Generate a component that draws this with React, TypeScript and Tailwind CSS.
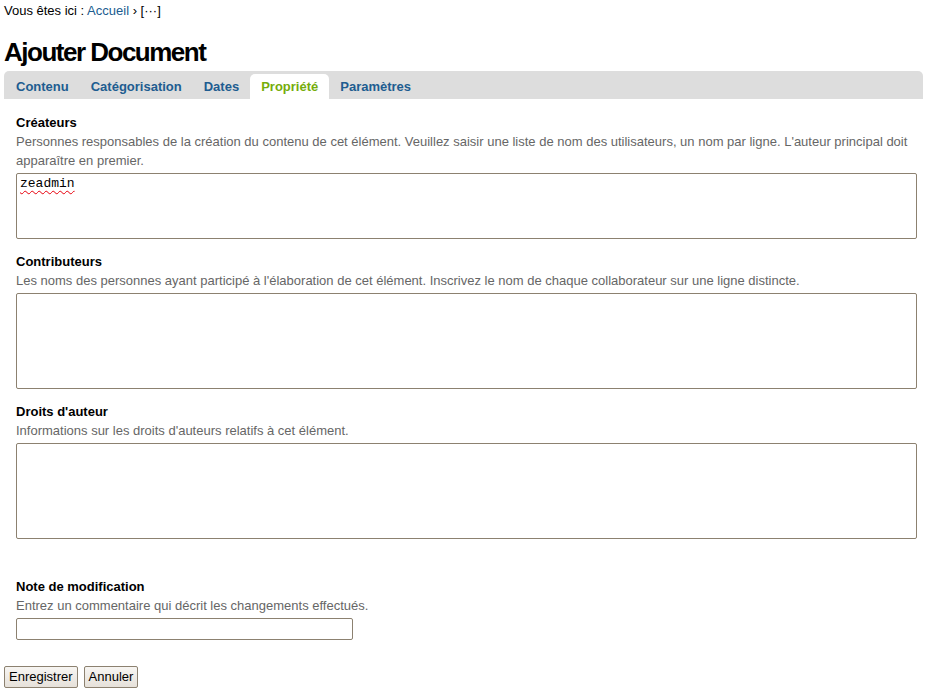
import React from 'react';

const tabs = ['Contenu', 'Catégorisation', 'Dates', 'Propriété', 'Paramètres'];

function Field({
  label,
  help,
  height,
  children,
}: {
  label: string;
  help: React.ReactNode;
  height: string;
  children?: React.ReactNode;
}) {
  return (
    <div className="mb-[13px]">
      <div className="text-[13px] leading-[19px] font-bold text-black">{label}</div>
      <div className="text-[13px] leading-[19px] text-[#666666]">{help}</div>
      <div
        className={`mt-[3px] ${height} w-full rounded-[2px] border border-[#8c8170] bg-white px-[3px] py-[2px] font-['Liberation_Mono',monospace] text-[13px] leading-[16px] text-black`}
      >
        {children}
      </div>
    </div>
  );
}

export default function App() {
  return (
    <div className="min-h-[694px] bg-white pl-[4px] pr-[8px] font-['Liberation_Sans',Arial,sans-serif] text-black">
      {/* Breadcrumb */}
      <div className="pt-[1px] text-[13px] leading-[19px]">
        Vous êtes ici : <span className="text-[#205c90]">Accueil</span> › [···]
      </div>

      <h1 className="mt-[16px] text-[26px] leading-[32px] font-bold tracking-[-1.5px]">Ajouter Document</h1>

      {/* Tabs */}
      <div className="mt-[3px] flex h-[28px] items-end rounded-t-[5px] bg-[#dddddd] pl-[1px]">
        {tabs.map((t) => (
          <div
            key={t}
            className={`flex h-[25px] items-center rounded-t-[5px] px-[11px] text-[13px] font-bold ${
              t === 'Propriété' ? 'bg-white text-[#75ad0a]' : 'text-[#205c90]'
            }`}
          >
            {t}
          </div>
        ))}
      </div>

      {/* Form */}
      <div className="pl-[12px] pr-[6px] pt-[14px]">
        <Field
          label="Créateurs"
          help="Personnes responsables de la création du contenu de cet élément. Veuillez saisir une liste de nom des utilisateurs, un nom par ligne. L'auteur principal doit apparaître en premier."
          height="h-[66px]"
        >
          <span className="underline decoration-wavy decoration-red-600 decoration-[1px] underline-offset-[3px]">zeadmin</span>
        </Field>
        <Field
          label="Contributeurs"
          help="Les noms des personnes ayant participé à l'élaboration de cet élément. Inscrivez le nom de chaque collaborateur sur une ligne distincte."
          height="h-[96px]"
        />
        <Field
          label="Droits d'auteur"
          help="Informations sur les droits d'auteurs relatifs à cet élément."
          height="h-[96px]"
        />

        <div className="mt-[38px]">
          <div className="text-[13px] leading-[19px] font-bold">Note de modification</div>
          <div className="text-[13px] leading-[19px] text-[#666666]">
            Entrez un commentaire qui décrit les changements effectués.
          </div>
          <input
            type="text"
            className="mt-[3px] block h-[22px] w-[337px] rounded-[2px] border border-[#8c8170] bg-white px-[3px] text-[13px] outline-none"
          />
        </div>
      </div>

      {/* Buttons */}
      <div className="mt-[26px] flex gap-[6px]">
        <button className="h-[22px] rounded-[2px] border border-[#8c8170] bg-gradient-to-b from-[#f7f5f2] to-[#e6e1da] px-[4px] text-[13px] leading-[20px] text-black">
          Enregistrer
        </button>
        <button className="h-[22px] rounded-[2px] border border-[#8c8170] bg-gradient-to-b from-[#f7f5f2] to-[#e6e1da] px-[4px] text-[13px] leading-[20px] text-black">
          Annuler
        </button>
      </div>
    </div>
  );
}
